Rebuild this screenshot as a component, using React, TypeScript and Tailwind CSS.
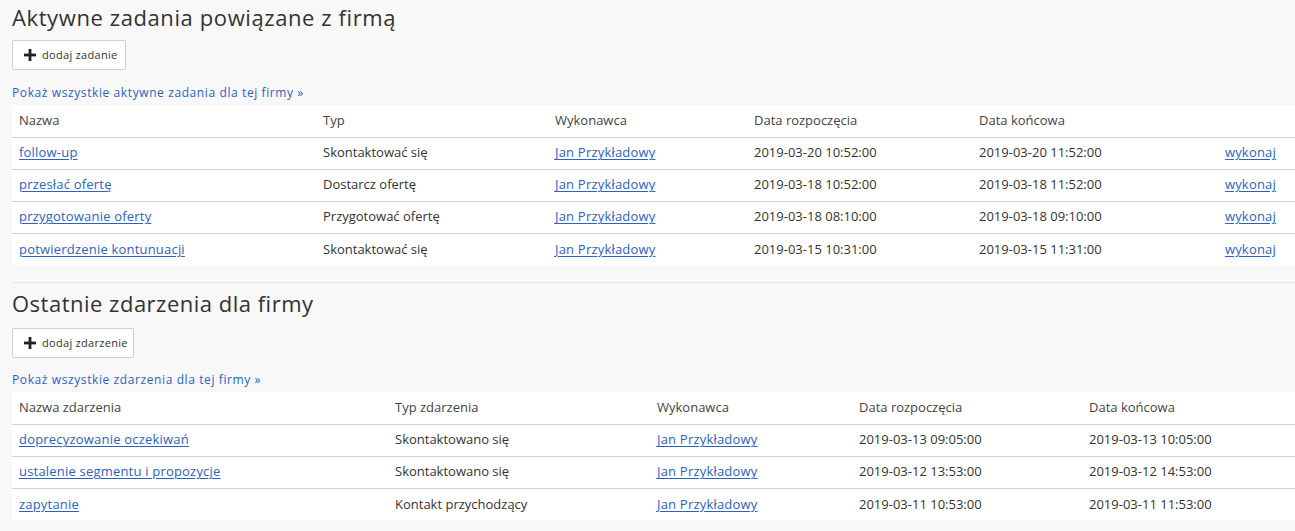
import React from "react";

const font = { fontFamily: '"Open Sans", "Noto Sans", sans-serif' };

function Plus() {
  return (
    <svg width="12" height="12" viewBox="0 0 12 12" className="shrink-0">
      <rect x="4.6" y="0" width="2.8" height="12" fill="#222" />
      <rect x="0" y="4.6" width="12" height="2.8" fill="#222" />
    </svg>
  );
}

function Btn({ label, w }: { label: string; w: string }) {
  return (
    <button
      className={`flex h-[30px] items-center gap-[6px] rounded-[2px] border border-[#cfcfcf] bg-white pl-[11px] text-[11px] tracking-[0.3px] text-[#333] ${w}`}
    >
      <Plus />
      <span>{label}</span>
    </button>
  );
}

const A = ({ children }: { children: React.ReactNode }) => (
  <a href="#" className="tracking-[0.2px] text-[#2c62c4] underline underline-offset-2">
    {children}
  </a>
);

const tasks = [
  ["follow-up", "Skontaktować się", "2019-03-20 10:52:00", "2019-03-20 11:52:00"],
  ["przesłać ofertę", "Dostarcz ofertę", "2019-03-18 10:52:00", "2019-03-18 11:52:00"],
  ["przygotowanie oferty", "Przygotować ofertę", "2019-03-18 08:10:00", "2019-03-18 09:10:00"],
  ["potwierdzenie kontunuacji", "Skontaktować się", "2019-03-15 10:31:00", "2019-03-15 11:31:00"],
];

const events = [
  ["doprecyzowanie oczekiwań", "Skontaktowano się", "2019-03-13 09:05:00", "2019-03-13 10:05:00"],
  ["ustalenie segmentu i propozycje", "Skontaktowano się", "2019-03-12 13:53:00", "2019-03-12 14:53:00"],
  ["zapytanie", "Kontakt przychodzący", "2019-03-11 10:53:00", "2019-03-11 11:53:00"],
];

export default function App() {
  return (
    <div className="min-h-[531px] w-[1295px] overflow-hidden bg-[#f8f8f8] pl-[12px] text-[13px] text-[#333]" style={font}>
      <h1 className="pt-[4px] text-[22px] leading-[26px] tracking-[0.6px] text-[#333]">Aktywne zadania powiązane z firmą</h1>
      <div className="mt-[10px]">
        <Btn label="dodaj zadanie" w="w-[114px]" />
      </div>
      <div className="mt-[15px] text-[12px] leading-[16px] tracking-[0.6px]">
        <a href="#" className="text-[#2c62c4]">Pokaż wszystkie aktywne zadania dla tej firmy »</a>
      </div>
      <table className="mt-[4px] w-[1283px] table-fixed border-collapse bg-white">
        <colgroup>
          <col className="w-[304px]" />
          <col className="w-[232px]" />
          <col className="w-[199px]" />
          <col className="w-[225px]" />
          <col className="w-[200px]" />
          <col />
        </colgroup>
        <thead>
          <tr className="h-[32px] border-b border-[#d2d2d2] text-left text-[#444]">
            <th className="pl-[7px] font-medium">Nazwa</th>
            <th className="pl-[7px] font-medium">Typ</th>
            <th className="pl-[7px] font-medium">Wykonawca</th>
            <th className="pl-[7px] font-medium">Data rozpoczęcia</th>
            <th className="pl-[7px] font-medium">Data końcowa</th>
            <th></th>
          </tr>
        </thead>
        <tbody>
          {tasks.map((r, i) => (
            <tr key={i} className={`h-[32px] ${i < tasks.length - 1 ? "border-b border-[#d2d2d2]" : ""}`}>
              <td className="pl-[7px]"><A>{r[0]}</A></td>
              <td className="pl-[7px]">{r[1]}</td>
              <td className="pl-[7px]"><A>Jan Przykładowy</A></td>
              <td className="pl-[7px]">{r[2]}</td>
              <td className="pl-[7px]">{r[3]}</td>
              <td className="pr-[19px] text-right"><A>wykonaj</A></td>
            </tr>
          ))}
        </tbody>
      </table>
      <div className="mt-[17px] border-t border-[#e6e6e6]" />
      <h2 className="mt-[7px] text-[22px] leading-[26px] tracking-[0.5px] text-[#333]">Ostatnie zdarzenia dla firmy</h2>
      <div className="mt-[12px]">
        <Btn label="dodaj zdarzenie" w="w-[122px]" />
      </div>
      <div className="mt-[14px] text-[12px] leading-[16px] tracking-[0.6px]">
        <a href="#" className="text-[#2c62c4]">Pokaż wszystkie zdarzenia dla tej firmy »</a>
      </div>
      <table className="mt-[4px] w-[1283px] table-fixed border-collapse bg-white">
        <colgroup>
          <col className="w-[376px]" />
          <col className="w-[262px]" />
          <col className="w-[202px]" />
          <col className="w-[230px]" />
          <col />
        </colgroup>
        <thead>
          <tr className="h-[32px] border-b border-[#d2d2d2] text-left text-[#444]">
            <th className="pl-[7px] font-medium">Nazwa zdarzenia</th>
            <th className="pl-[7px] font-medium">Typ zdarzenia</th>
            <th className="pl-[7px] font-medium">Wykonawca</th>
            <th className="pl-[7px] font-medium">Data rozpoczęcia</th>
            <th className="pl-[7px] font-medium">Data końcowa</th>
          </tr>
        </thead>
        <tbody>
          {events.map((r, i) => (
            <tr key={i} className={`h-[32px] ${i < events.length - 1 ? "border-b border-[#d2d2d2]" : ""}`}>
              <td className="pl-[7px]"><A>{r[0]}</A></td>
              <td className="pl-[7px]">{r[1]}</td>
              <td className="pl-[7px]"><A>Jan Przykładowy</A></td>
              <td className="pl-[7px]">{r[2]}</td>
              <td className="pl-[7px]">{r[3]}</td>
            </tr>
          ))}
        </tbody>
      </table>
    </div>
  );
}
